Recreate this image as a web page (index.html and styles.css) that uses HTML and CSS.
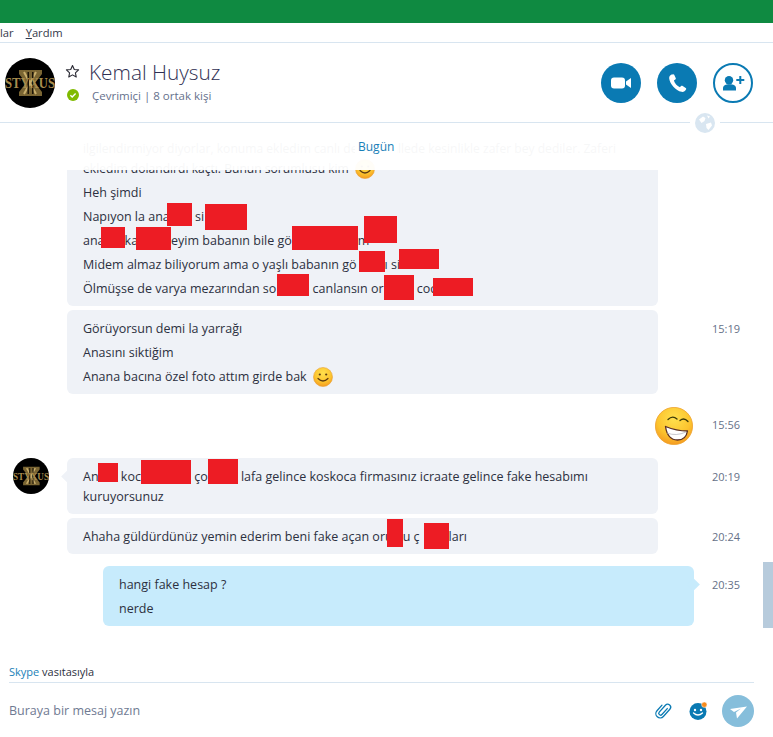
FILE: index.html
```html
<!DOCTYPE html>
<html lang="tr">
  <head>
    <meta charset="UTF-8" />
    <meta name="viewport" content="width=device-width, initial-scale=1.0" />
    <title>Skype - Kemal Huysuz</title>
    <link rel="stylesheet" href="styles.css">
  </head>
  <body>
    <svg class="defs" aria-hidden="true">
      <defs>
        <radialGradient id="face" cx="50%" cy="30%" r="75%">
          <stop offset="0%" stop-color="#ffe04d" />
          <stop offset="60%" stop-color="#fcc42e" />
          <stop offset="100%" stop-color="#f3931f" />
        </radialGradient>
        <symbol id="logo" viewBox="0 0 50 50">
          <circle cx="25" cy="25" r="25" fill="#000" />
          <path d="M14 12h23v4l-7 9 7 9v4H14v-4l7-9-7-9z" fill="#7a6533" />
          <path d="M19 14l12 22M31 14L19 36" stroke="#c8ad6b" stroke-width="2" />
          <path d="M22.500 14h1.500v22h-1.500zM27 14h1.500v22H27z" fill="#1b1408" />
          <text x="25" y="30" text-anchor="middle" textLength="50" lengthAdjust="spacingAndGlyphs" class="logo-text">STYXUS</text>
        </symbol>
        <symbol id="smile" viewBox="0 0 20 20">
          <circle cx="10" cy="10" r="9.500" fill="url(#face)" stroke="#e8a030" stroke-width=".6" />
          <circle cx="6.800" cy="7.500" r="1.100" fill="#5c3a12" />
          <circle cx="13.200" cy="7.500" r="1.100" fill="#5c3a12" />
          <path d="M5 11.500q5 5 10 0" fill="none" stroke="#5c3a12" stroke-width="1.200" stroke-linecap="round" />
        </symbol>
      </defs>
    </svg>

    <div class="titlebar"></div>

    <nav class="menubar">
      <span>lar</span>
      <span><u>Y</u>ardım</span>
    </nav>

    <header class="header">
      <svg class="avatar"><use href="#logo" /></svg>
      <div class="contact">
        <div class="contact-name">
          <svg class="star" viewBox="0 0 16 16">
            <path d="M8 1.600l1.900 4.200 4.600.5-3.400 3.100.9 4.500L8 11.600l-4 2.300.9-4.500L1.500 6.300l4.600-.5z" fill="none" stroke="#2b2b35" stroke-width="1.200" stroke-linejoin="round" />
          </svg>
          <h1>Kemal Huysuz</h1>
        </div>
        <div class="contact-status">
          <svg class="online" viewBox="0 0 12 12">
            <circle cx="6" cy="6" r="6" fill="#7fba00" />
            <path d="M3.400 6.200l1.800 1.700 3.400-3.400" fill="none" stroke="#fff" stroke-width="1.400" />
          </svg>
          <span>Çevrimiçi | 8 ortak kişi</span>
        </div>
      </div>
      <div class="actions">
        <button class="action">
          <svg viewBox="0 0 40 40"><rect x="10" y="14.500" width="14" height="11" rx="3" fill="#fff" /><path d="M25 18.500l5-3.500v10l-5-3.500z" fill="#fff" /></svg>
        </button>
        <button class="action">
          <svg viewBox="0 0 40 40"><path d="M14.500 11.500c-1.500.8-2.500 2-2.300 4 .6 5.500 6.500 12.300 12.300 13.300 2.200.4 3.500-.8 4.500-2.300.4-.6.2-1.200-.3-1.600l-3-2c-.6-.4-1.200-.3-1.700.2l-1.100 1.200c-2.800-1-5.300-4-6-6.700l1.400-1c.6-.4.7-1 .4-1.600l-1.500-3.300c-.4-.6-1.100-.7-1.700-.2z" fill="#fff" /></svg>
        </button>
        <button class="action action-outline">
          <svg viewBox="0 0 36 36"><circle cx="14" cy="15.300" r="4.200" fill="#0a7ab3" /><path d="M8 25.500v-2.500c0-2.400 2.500-3.800 6.500-3.800s6.500 1.400 6.500 3.800v2.500z" fill="#0a7ab3" /><path d="M21.300 15h8M25.300 11v8" stroke="#0a7ab3" stroke-width="2" /></svg>
        </button>
      </div>
      <span class="globe">
        <svg viewBox="0 0 20 20">
          <circle cx="10" cy="10" r="10" fill="#d9e6f1" />
          <path d="M4 6.500l4-3 2.500 1.500-1 3-3 2zM11 11l5-1.500 1 3-3.500 4.500-2-2zM12 2.500l3 1-1.500 2z" fill="#fff" />
        </svg>
      </span>
    </header>

    <main class="chat">
      <div class="row">
        <div class="bubble">
          <p class="ghost">ilgilendirmiyor diyorlar, konuma ekledim canlı destek hallede kesinlikle zafer bey dediler. Zaferi<br>ekledim dolandırdı kaçtı. Bunun sorumlusu kim <svg class="emoji"><use href="#smile" /></svg></p>
          <p>Heh şimdi</p>
          <p>Napıyon la ana<span class="redact r1"></span> si<span class="redact r2"></span></p>
          <p>ana<span class="redact r3"></span>ka<span class="redact r4"></span>eyim babanın bile gö<span class="redact r5"></span>m<span class="redact r6"></span></p>
          <p>Midem almaz biliyorum ama o yaşlı babanın gö<span class="redact r7"></span>ı si<span class="redact r8"></span></p>
          <p>Ölmüşse de varya mezarından so<span class="redact r9"></span> canlansın or<span class="redact r10"></span> coc<span class="redact r11"></span></p>
        </div>
      </div>

      <div class="row">
        <div class="bubble">
          <p>Görüyorsun demi la yarrağı</p>
          <p>Anasını siktiğim</p>
          <p>Anana bacına özel foto attım girde bak <svg class="emoji"><use href="#smile" /></svg></p>
        </div>
        <time class="time">15:19</time>
      </div>

      <div class="row row-emoji">
        <svg class="big-emoji" viewBox="0 0 38 38">
          <circle cx="19" cy="19" r="18.600" fill="url(#face)" stroke="#eda12c" stroke-width=".8" />
          <path d="M13 12.500q4.500-4.500 9-.5M25 13.500q4-3.500 8 1" fill="none" stroke="#3d3a08" stroke-width="1.300" stroke-linecap="round" />
          <path d="M10.500 19.500q11 4.500 22 4.500-1.500 9-10 9-10 0-12-13.500z" fill="#fff" stroke="#5b2f24" stroke-width="1.300" stroke-linejoin="round" />
          <path d="M12 26q9 3.500 19-1" fill="none" stroke="#b9b9c2" stroke-width=".8" />
        </svg>
        <time class="time time-emoji">15:56</time>
      </div>

      <div class="row row-sender">
        <svg class="avatar-small"><use href="#logo" /></svg>
        <div class="bubble bubble-tail">
          <p>An<span class="redact r12"></span> koc<span class="redact r13"></span> ço<span class="redact r14"></span> lafa gelince koskoca firmasınız icraate gelince fake hesabımı<br>kuruyorsunuz</p>
        </div>
        <time class="time">20:19</time>
      </div>

      <div class="row">
        <div class="bubble">
          <p>Ahaha güldürdünüz yemin ederim beni fake açan oru<span class="redact r15"></span>u ç<span class="redact r16"></span>ları</p>
        </div>
        <time class="time">20:24</time>
      </div>

      <div class="row row-mine">
        <div class="bubble bubble-mine">
          <p>hangi fake hesap ?</p>
          <p>nerde</p>
        </div>
        <time class="time">20:35</time>
      </div>

      <div class="fade"><span class="today">Bugün</span></div>
      <div class="scroll-thumb"></div>
    </main>

    <footer class="footer">
      <div class="via"><span class="via-link">Skype</span> vasıtasıyla</div>
      <div class="composer">
        <span class="placeholder">Buraya bir mesaj yazın</span>
        <svg class="tool tool-clip" viewBox="0 0 18 18">
          <path transform="rotate(42 9 9)" d="M9.800 5v8a1.800 1.800 0 0 1-3.600 0V3.800a3 3 0 0 1 6 0v9.700a4.300 4.300 0 0 1-8.600 0V6" fill="none" stroke="#0a7ab3" stroke-width="1.300" stroke-linecap="round" />
        </svg>
        <svg class="tool" viewBox="0 0 18 18">
          <circle cx="9" cy="9.500" r="8.500" fill="#0a7ab3" />
          <circle cx="6" cy="8" r="1.200" fill="#fff" />
          <circle cx="12" cy="8" r="1.200" fill="#fff" />
          <path d="M4.500 11q4.500 4 9 0" fill="none" stroke="#fff" stroke-width="1.300" stroke-linecap="round" />
          <circle cx="15.300" cy="2.700" r="2.700" fill="#f68b1e" stroke="#fff" stroke-width=".5" />
        </svg>
        <button class="send">
          <svg viewBox="0 0 32 32"><path d="M8 14l17-2.500-10 12-1-6 5-4-7 3.500z" fill="#fff" /></svg>
        </button>
      </div>
    </footer>
  </body>
</html>
```

FILE: styles.css
```css
* {
  box-sizing: border-box;
}

html,
body {
  height: 100%;
}

body {
  margin: 0;
  height: 737px;
  display: flex;
  flex-direction: column;
  overflow: hidden;
  background: #fff;
  font-family: "Open Sans", "Noto Sans", sans-serif;
  font-size: 12.5px;
  color: #2c3040;
}

.defs {
  position: absolute;
  width: 0;
  height: 0;
}

.logo-text {
  font-family: "Liberation Serif", serif;
  font-weight: bold;
  font-size: 15px;
  fill: #a88c4d;
}

.titlebar {
  height: 23px;
  background: #0f8a41;
}

.menubar {
  height: 20px;
  display: flex;
  align-items: center;
  gap: 12px;
  border-bottom: 1px solid #d8e5f0;
  font-size: 11.2px;
  color: #33384a;
}

.header {
  position: relative;
  height: 80px;
  flex: none;
  display: flex;
  align-items: center;
  padding: 0 20px 0 5px;
  border-bottom: 1px solid #d8e5f0;
}

.avatar {
  width: 50px;
  height: 50px;
}

.contact {
  margin-left: 10px;
  margin-top: -5px;
}

.contact-name {
  display: flex;
  align-items: center;
  gap: 9px;
}

.star {
  width: 15px;
  height: 15px;
}

.contact-name h1 {
  margin: 0;
  font-size: 20.8px;
  font-weight: 300;
  line-height: 28px;
  color: #2f2f52;
}

.contact-status {
  display: flex;
  align-items: center;
  gap: 13px;
  margin-left: 2px;
  margin-top: 2px;
  font-size: 11.5px;
  color: #66718c;
}

.online {
  width: 12px;
  height: 12px;
}

.actions {
  margin-left: auto;
  display: flex;
  gap: 16px;
}

.action {
  width: 40px;
  height: 40px;
  padding: 0;
  border: none;
  border-radius: 50%;
  background: #0a7ab3;
}

.action svg {
  display: block;
  width: 40px;
  height: 40px;
}

.action-outline {
  background: #fff;
  border: 2px solid #0a7ab3;
}

.action-outline svg {
  width: 36px;
  height: 36px;
}

.globe {
  position: absolute;
  left: 690px;
  top: 68px;
  width: 30px;
  height: 24px;
  padding: 2px 5px;
  background: #fff;
  z-index: 3;
}

.globe svg {
  display: block;
  width: 20px;
  height: 20px;
}

.chat {
  position: relative;
  flex: 1;
  overflow: hidden;
  padding-top: 7px;
}

.row {
  display: flex;
  align-items: flex-start;
  padding-left: 67px;
  margin-bottom: 4px;
}

.bubble {
  width: 591px;
  padding: 9px 16px 7px;
  border-radius: 6px;
  background: #eff2f7;
}

.bubble p {
  margin: 0 0 4px;
  line-height: 20px;
}

.bubble p:last-child {
  margin-bottom: 0;
}

.bubble .ghost {
  white-space: nowrap;
  font-size: 12.1px;
}

.emoji {
  position: relative;
  top: -1px;
  width: 20px;
  height: 20px;
  margin: -4px 0 -4px 3px;
  vertical-align: middle;
}

.time {
  margin-left: auto;
  width: 61px;
  padding-top: 9px;
  line-height: 20px;
  font-size: 11px;
  color: #667188;
}

.row-emoji {
  margin-top: 13px;
  margin-bottom: 13px;
  height: 38px;
}

.big-emoji {
  width: 38px;
  height: 38px;
  margin-left: 588px;
}

.time-emoji {
  padding-top: 8px;
}

.row-sender {
  position: relative;
}

.avatar-small {
  position: absolute;
  left: 13px;
  top: 0;
  width: 36px;
  height: 36px;
}

.bubble-tail {
  position: relative;
}

.bubble-tail::before {
  content: "";
  position: absolute;
  left: -4px;
  top: 14px;
  width: 9px;
  height: 9px;
  background: #eff2f7;
  transform: rotate(45deg);
}

.row-mine {
  padding-left: 103px;
  margin-top: 12px;
}

.bubble-mine {
  position: relative;
  background: #c7ebfc;
}

.bubble-mine::after {
  content: "";
  position: absolute;
  right: -4px;
  top: 14px;
  width: 9px;
  height: 9px;
  background: #c7ebfc;
  transform: rotate(45deg);
}

/* redaction boxes: inline gap in the text, red fill hangs off the baseline */
.redact {
  position: relative;
  top: -1px;
  display: inline-block;
  height: 0;
}

.redact::after {
  content: "";
  position: absolute;
  left: 0;
  right: 0;
  background: #ed1c24;
}

.r1 { width: 25px; margin-left: -3px; }
.r1::after { top: -17px; height: 23px; }
.r2 { width: 42px; margin-left: 1px; }
.r2::after { top: -16px; height: 26px; }
.r3 { width: 24px; margin-left: -4px; }
.r3::after { top: -17px; height: 21px; }
.r4 { width: 35px; margin-left: -2px; }
.r4::after { top: -17px; height: 23px; }
.r5 { width: 66px; }
.r5::after { top: -18px; height: 24px; }
.r6 { width: 33px; margin-left: -5px; }
.r6::after { top: -28px; height: 27px; }
.r7 { width: 26px; margin-left: 2px; }
.r7::after { top: -17px; height: 21px; }
.r8 { width: 40px; margin-left: -1px; }
.r8::after { top: -19px; height: 20px; }
.r9 { width: 32px; margin-left: 1px; }
.r9::after { top: -18px; height: 22px; }
.r10 { width: 30px; }
.r10::after { top: -17px; height: 25px; }
.r11 { width: 40px; margin-left: -3px; }
.r11::after { top: -14px; height: 18px; }
.r12 { width: 20px; margin-left: -1px; }
.r12::after { top: -17px; height: 19px; }
.r13 { width: 50px; }
.r13::after { top: -20px; height: 24px; }
.r14 { width: 30px; }
.r14::after { top: -21px; height: 25px; }
.r15 { width: 16px; margin-left: -6px; }
.r15::after { top: -21px; height: 28px; }
.r16 { width: 25px; margin-left: 4px; }
.r16::after { top: -17px; height: 26px; }

.fade {
  position: absolute;
  left: 0;
  right: 0;
  top: 0;
  height: 47px;
  background: rgba(255, 255, 255, 0.96);
  text-align: center;
}

.today {
  position: absolute;
  left: 355px;
  top: 14px;
  padding: 0 3px;
  line-height: 20px;
  font-size: 12px;
  color: #1a7fb8;
  background: #fff;
}

.scroll-thumb {
  position: absolute;
  right: 0;
  top: 439px;
  width: 10px;
  height: 66px;
  background: #b7cbdc;
}

.footer {
  flex: none;
}

.via {
  margin-left: 9px;
  width: 745px;
  height: 23px;
  padding-top: 4px;
  line-height: 16px;
  font-size: 11px;
  border-bottom: 1px solid #d8e5f0;
}

.via-link {
  color: #1a7fb8;
}

.composer {
  height: 54px;
  display: flex;
  align-items: center;
  padding: 1px 19px 0 9px;
}

.placeholder {
  margin-right: auto;
  font-size: 12.5px;
  color: #6f7a92;
}

.tool {
  width: 18px;
  height: 18px;
  margin-right: 15px;
}

.tool-clip {
  margin-right: 16px;
}

.send {
  width: 32px;
  height: 32px;
  padding: 0;
  border: none;
  border-radius: 50%;
  background: #86bedb;
}

.send svg {
  display: block;
  width: 32px;
  height: 32px;
}
```
